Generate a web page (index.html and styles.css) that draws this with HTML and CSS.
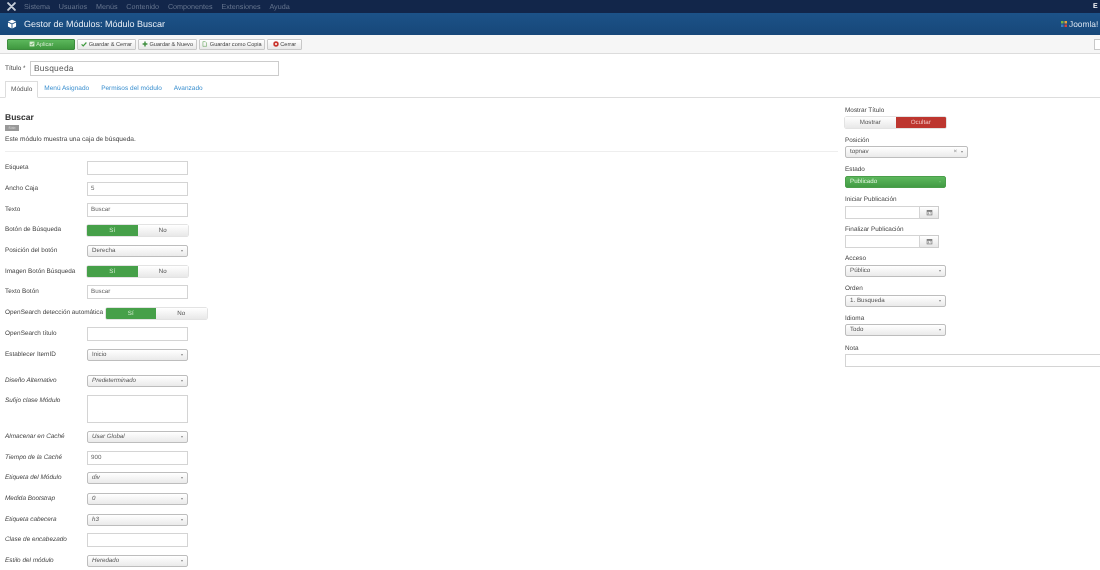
FILE: index.html
```html
<!DOCTYPE html>
<html lang="es">
<head>
<meta charset="utf-8">
<title>Gestor de Módulos: Módulo Buscar</title>
<link rel="stylesheet" href="styles.css">
</head>
<body>
<nav class="topbar">
  <svg class="nav-logo" viewBox="0 0 16 16"><path d="M2 2l12 12M14 2L2 14" stroke="#c5cdd8" stroke-width="3.4" stroke-linecap="round" fill="none"/></svg>
  <ul class="nav-list">
    <li>Sistema</li><li>Usuarios</li><li>Menús</li><li>Contenido</li><li>Componentes</li><li>Extensiones</li><li>Ayuda</li>
  </ul>
  <span class="nav-user">E</span>
</nav>
<header class="subhead">
  <svg class="cube" viewBox="0 0 16 16"><path d="M8 1l6.5 3L8 7 1.500 4zM1.500 5.500L7.300 8.300V15L1.500 12zM14.500 5.500L8.700 8.300V15l5.800-3z" fill="#fff"/></svg>
  <h1>Gestor de Módulos: Módulo Buscar</h1>
  <div class="brand">
    <svg class="brand-mark" viewBox="0 0 16 16"><path d="M2 2h5v5H2z" fill="#7ab441"/><path d="M9 2h5v5H9z" fill="#e8a33a"/><path d="M2 9h5v5H2z" fill="#3a7fc4"/><path d="M9 9h5v5H9z" fill="#d8443a"/></svg>
    <span>Joomla!</span>
  </div>
</header>
<div class="toolbar">
  <button class="tbtn tbtn-apply"><svg class="ico" viewBox="0 0 10 10"><path d="M1 1h8v8H1z" fill="#d6efd0"/><path d="M2.500 5l2 2 3-4" stroke="#46953f" stroke-width="1.300" fill="none"/></svg>Aplicar</button>
  <button class="tbtn"><svg class="ico" viewBox="0 0 10 10"><path d="M1 5.500l2.700 2.700L9 2.500" stroke="#3f9a3f" stroke-width="2" fill="none"/></svg>Guardar &amp; Cerrar</button>
  <button class="tbtn"><svg class="ico" viewBox="0 0 10 10"><path d="M5 1v8M1 5h8" stroke="#3f8f3f" stroke-width="2.400"/></svg>Guardar &amp; Nuevo</button>
  <button class="tbtn tbtn-copy"><svg class="ico" viewBox="0 0 10 10"><path d="M1.500 1h4l2 2v6h-6z" fill="none" stroke="#6aa860" stroke-width="1"/></svg>Guardar como Copia</button>
  <button class="tbtn"><svg class="ico" viewBox="0 0 10 10"><circle cx="5" cy="5" r="4.500" fill="#c8332b"/><path d="M3.300 3.300l3.400 3.400M6.700 3.300L3.300 6.700" stroke="#fff" stroke-width="1.300"/></svg>Cerrar</button>
  <span class="tbtn-help"></span>
</div>
<main class="page">
  <div class="title-row">
    <label class="title-label">Título *</label>
    <div class="title-input">Busqueda</div>
  </div>
  <ul class="tabs">
    <li class="tab tab-active">Módulo</li>
    <li class="tab">Menú Asignado</li>
    <li class="tab">Permisos del módulo</li>
    <li class="tab">Avanzado</li>
  </ul>
  <div class="columns">
    <section class="left">
      <h2>Buscar</h2>
      <span class="badge">Sitio</span>
      <p class="desc">Este módulo muestra una caja de búsqueda.</p>
      <hr class="rule">
      <div class="form">
        <div class="row"><label>Etiqueta</label><div class="input"></div></div>
        <div class="row"><label>Ancho Caja</label><div class="input">5</div></div>
        <div class="row"><label>Texto</label><div class="input">Buscar</div></div>
        <div class="row"><label>Botón de Búsqueda</label><div class="toggle"><span class="on">Sí</span><span>No</span></div></div>
        <div class="row"><label>Posición del botón</label><div class="select">Derecha</div></div>
        <div class="row"><label>Imagen Botón Búsqueda</label><div class="toggle"><span class="on">Sí</span><span>No</span></div></div>
        <div class="row"><label>Texto Botón</label><div class="input">Buscar</div></div>
        <div class="row"><label class="wide">OpenSearch detección automática</label><div class="toggle"><span class="on">Sí</span><span>No</span></div></div>
        <div class="row"><label>OpenSearch título</label><div class="input"></div></div>
        <div class="row"><label>Establecer ItemID</label><div class="select">Inicio</div></div>
        <div class="row row-em row-gap"><label>Diseño Alternativo</label><div class="select">Predeterminado</div></div>
        <div class="row row-em row-tall"><label>Sufijo clase Módulo</label><div class="textarea"></div></div>
        <div class="row row-em"><label>Almacenar en Caché</label><div class="select">Usar Global</div></div>
        <div class="row row-em"><label>Tiempo de la Caché</label><div class="input">900</div></div>
        <div class="row row-em"><label>Etiqueta del Módulo</label><div class="select">div</div></div>
        <div class="row row-em"><label>Medida Bootstrap</label><div class="select">0</div></div>
        <div class="row row-em"><label>Etiqueta cabecera</label><div class="select">h3</div></div>
        <div class="row row-em"><label>Clase de encabezado</label><div class="input"></div></div>
        <div class="row row-em"><label>Estilo del módulo</label><div class="select">Heredado</div></div>
      </div>
    </section>
    <aside class="right">
      <div class="group"><label>Mostrar Título</label><div class="toggle toggle-red"><span>Mostrar</span><span class="off">Ocultar</span></div></div>
      <div class="group"><label>Posición</label><div class="select select-pos">topnav<i class="clear">×</i></div></div>
      <div class="group"><label>Estado</label><div class="select select-green">Publicado</div></div>
      <div class="group"><label>Iniciar Publicación</label><div class="date"><div class="date-field"></div><div class="date-btn"><svg viewBox="0 0 10 10"><path d="M1 1.500h8v7.500H1z" fill="#777"/><path d="M2 4h6v4H2z" fill="#eee"/><path d="M3 5h1v1H3zM6 5h1v1H6zM3 6.600h1v1H3z" fill="#666"/></svg></div></div></div>
      <div class="group"><label>Finalizar Publicación</label><div class="date"><div class="date-field"></div><div class="date-btn"><svg viewBox="0 0 10 10"><path d="M1 1.500h8v7.500H1z" fill="#777"/><path d="M2 4h6v4H2z" fill="#eee"/><path d="M3 5h1v1H3zM6 5h1v1H6zM3 6.600h1v1H3z" fill="#666"/></svg></div></div></div>
      <div class="group"><label>Acceso</label><div class="select">Público</div></div>
      <div class="group"><label>Orden</label><div class="select">1. Busqueda</div></div>
      <div class="group"><label>Idioma</label><div class="select">Todo</div></div>
      <div class="group"><label>Nota</label><div class="input input-note"></div></div>
    </aside>
  </div>
</main>
</body>
</html>
```

FILE: styles.css
```css
* { box-sizing: border-box; }
html, body { margin: 0; height: 570px; width: 1100px; overflow: hidden; background: #fff; }
body { font-family: "Liberation Sans", Arial, sans-serif; font-size: 6.5px; color: #444; filter: blur(0.4px); text-rendering: geometricPrecision; }
ul { list-style: none; margin: 0; padding: 0; }

.topbar { height: 13px; background: #12264a; display: flex; align-items: center; padding-left: 7px; color: #66758e; font-size: 7.200px; }
.nav-logo { width: 9px; height: 9px; flex: none; }
.nav-list { display: flex; gap: 8.800px; margin-left: 8px; }
.nav-user { margin-left: auto; margin-right: 1px; color: #fff; font-weight: bold; font-size: 7px; width: 6px; }

.subhead { height: 22px; background: linear-gradient(#1c5288, #174779); display: flex; align-items: center; padding-left: 7px; color: #e8eef5; }
.cube { width: 10px; height: 10px; flex: none; }
.subhead h1 { margin: 0 0 0 7px; font-size: 9px; font-weight: normal; }
.brand { margin-left: auto; display: flex; align-items: center; width: 40px; font-size: 8.400px; color: #d5e0ec; gap: 1px; flex: none; white-space: nowrap; }
.brand-mark { width: 8px; height: 8px; flex: none; }

.toolbar { height: 19px; background: #f6f6f6; border-bottom: 1px solid #dcdcdc; display: flex; align-items: center; padding: 0 0 0 7px; gap: 2px; }
.tbtn { height: 11px; width: 59px; padding: 0; display: flex; align-items: center; justify-content: center; gap: 1.500px; font: 5.600px "Liberation Sans", Arial, sans-serif; color: #444; background: linear-gradient(#fff, #e8e8e8); border: 1px solid #c8c8c8; border-radius: 1px; }
.tbtn:last-of-type { width: 35px; }
.tbtn-copy { width: 66px; }
.tbtn-apply { width: 68px; background: linear-gradient(#5cb75c, #3f983f); border-color: #3d8b3d; color: #cfe9cc; }
.ico { width: 6px; height: 6px; flex: none; }
.tbtn-help { margin-left: auto; width: 6px; height: 11px; background: #fff; border: 1px solid #c8c8c8; border-right: 0; }

.page { display: block; }
.title-row { display: flex; align-items: center; padding: 7px 0 0 5px; gap: 4px; }
.title-label { font-size: 6.500px; width: 21px; }
.title-input { width: 249px; height: 15px; border: 1px solid #ccc; padding-left: 3px; line-height: 13px; font-size: 8.400px; letter-spacing: 0.25px; color: #555; }

.tabs { display: flex; margin-top: 4px; padding-left: 5px; height: 18px; border-bottom: 1px solid #ddd; align-items: flex-end; }
.tab { padding: 0 6px 3px; color: #3a8fcf; font-size: 6.500px; line-height: 9px; height: 17px; padding-top: 4px; }
.tab-active { color: #555; background: #fff; border: 1px solid #ddd; border-bottom: 1px solid #fff; height: 17px; padding: 3px 5px 0; margin-bottom: -1px; }

.columns { display: flex; align-items: flex-start; }
.left { width: 838px; padding: 14px 0 0 5px; flex: none; }
.left h2 { margin: 0; font-size: 8.500px; line-height: 11px; color: #333; }
.badge { display: block; width: 14px; height: 6px; margin-top: 2px; background: #999; color: #ddd; font-size: 3.500px; line-height: 6px; text-align: center; }
.desc { margin: 4.500px 0 0; font-size: 6.600px; line-height: 8px; }
.rule { border: 0; border-top: 1px solid #eee; margin: 7px 0 0; }

.form { padding-top: 6.500px; }
.row { display: flex; align-items: center; height: 20.700px; }
.row label { width: 82px; flex: none; margin-top: -1px; font-size: 6.400px; white-space: nowrap; }
.row label.wide { width: 100.500px; }
.row-em label { font-style: italic; }
.row-gap { margin-top: 5.300px; }
.row-tall { height: 35.800px; }
.row-tall label { align-self: flex-start; margin-top: 6px; }
.input, .textarea { width: 101px; height: 14px; border: 1px solid #d4d4d4; padding-left: 3px; line-height: 12px; font-size: 6.200px; color: #666; background: #fff; }
.textarea { height: 28px; }
.select { position: relative; width: 101px; height: 12px; border: 1px solid #bdbdbd; border-radius: 2px; padding-left: 4px; line-height: 10px; font-size: 6.200px; color: #555; background: linear-gradient(#fff, #eaeaea); font-style: inherit; }
.row-em .select { font-style: italic; }
.select::after { content: ""; position: absolute; right: 4px; top: 4px; border: 1.500px solid transparent; border-top: 2px solid #888; }
.toggle { display: flex; width: 101px; height: 11px; font-size: 6.200px; line-height: 11px; text-align: center; border-radius: 1px; overflow: hidden; box-shadow: 0 0 0 0.5px #c8c8c8; }
.toggle span { flex: 1; background: linear-gradient(#fff, #e8e8e8); color: #555; }
.toggle .on { background: #46a049; color: #d5ecd2; }
.toggle .off { background: #bd362f; color: #f0c6c3; }

.right { padding: 9px 0 0 7px; flex: none; width: 262px; }
.right .toggle { margin-top: 0.500px; }
.group { height: 29.700px; }
.group label { display: block; font-size: 6.400px; line-height: 8px; margin-bottom: 1.500px; }
.select-pos { width: 123px; }
.clear { position: absolute; right: 10px; top: 0; font-style: normal; color: #888; }
.select-green { background: linear-gradient(#5cb75c, #429b44); border-color: #4a9e4a; color: #dff2dc; }
.select-green::after { border-top-color: #6dbb6d; }
.date { display: flex; height: 13px; }
.date-field { width: 75px; border: 1px solid #d4d4d4; }
.date-btn { width: 19px; background: linear-gradient(#fff, #e6e6e6); border: 1px solid #ccc; border-left: 0; display: flex; align-items: center; justify-content: center; }
.date-btn svg { width: 7px; height: 7px; }
.input-note { width: 270px; height: 13px; }
```
